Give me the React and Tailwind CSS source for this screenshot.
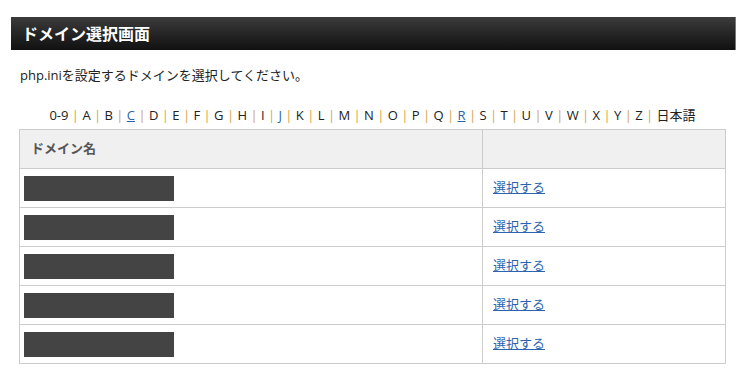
const letters = ['0-9', 'A', 'B', 'C', 'D', 'E', 'F', 'G', 'H', 'I', 'J', 'K', 'L', 'M', 'N', 'O', 'P', 'Q', 'R', 'S', 'T', 'U', 'V', 'W', 'X', 'Y', 'Z', '日本語'];
const linked = ['C', 'J', 'R'];

export default function App() {
  return (
    <div
      className="bg-white w-[747px] h-[386px] pt-[17px] pl-[11px] text-[13px] text-[#222]"
      style={{ fontFamily: '"Open Sans", "Noto Sans CJK JP", sans-serif' }}
    >
      <div className="w-[725px] h-[33px] bg-gradient-to-b from-[#3c3c3c] to-[#111] border-r border-[#777] flex items-center pl-[11px]">
        <h1 className="text-white font-bold text-[16px] leading-none">ドメイン選択画面</h1>
      </div>

      <p className="mt-[16px] ml-[9px] leading-[18px]">php.iniを設定するドメインを選択してください。</p>

      <div className="ml-[8px] w-[707px] mt-[22px]">
        <div className="flex justify-center leading-[18px] h-[18px]">
          {letters.map((l, i) => (
            <span key={l} className="whitespace-pre">
              {i > 0 && <span className="text-[#d2a545]"> | </span>}
              {linked.includes(l) ? (
                <a href="#" className="text-[#2a64b0] underline">{l}</a>
              ) : (
                <span>{l}</span>
              )}
            </span>
          ))}
        </div>

        <table className="w-full border-collapse mt-[5px]">
          <thead>
            <tr className="h-[39px] bg-[#f0f0f0]">
              <th className="w-[463px] border border-[#ccc] text-left pl-[11px] font-bold text-[#555]">ドメイン名</th>
              <th className="border border-[#ccc]"></th>
            </tr>
          </thead>
          <tbody>
            {[0, 1, 2, 3, 4].map((i) => (
              <tr key={i} className="h-[39px]">
                <td className="border border-[#ccc] pl-[4px]">
                  <div className="w-[150px] h-[25px] bg-[#444]" />
                </td>
                <td className="border border-[#ccc] pl-[10px]">
                  <a href="#" className="text-[#2a64b0] underline">選択する</a>
                </td>
              </tr>
            ))}
          </tbody>
        </table>
      </div>
    </div>
  );
}
